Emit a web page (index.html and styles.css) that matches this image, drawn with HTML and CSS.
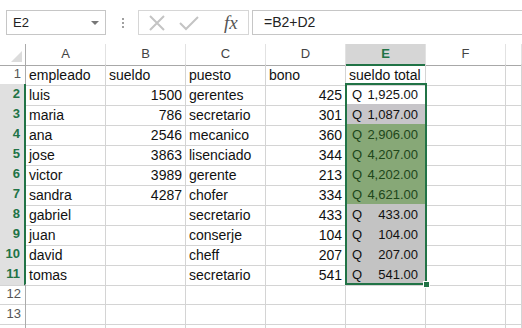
FILE: index.html
```html
<!DOCTYPE html>
<html lang="es">
<head>
<meta charset="UTF-8" />
<title>Hoja de cálculo</title>
<link rel="stylesheet" href="styles.css">
</head>
<body>

<div class="toolbar">
  <div class="namebox">
    <span>E2</span>
    <span class="arrow"></span>
  </div>
  <div class="grip"><i></i><i></i><i></i></div>
  <div class="btns">
    <svg class="ico" width="20" height="20" viewBox="0 0 20 20"><path d="M3 3 L17 17 M17 3 L3 17" stroke="#c4c4c4" stroke-width="2" fill="none"/></svg>
    <svg class="ico" width="22" height="20" viewBox="0 0 22 20"><path d="M2 10 L8 16 L20 4" stroke="#c4c4c4" stroke-width="2" fill="none"/></svg>
    <span class="fx">fx</span>
  </div>
  <div class="formula">=B2+D2</div>
</div>

<div class="sheet">
  <div class="row head">
    <div class="corner"><span class="tri"></span></div>
    <div>A</div><div>B</div><div>C</div><div>D</div><div class="sel">E</div><div>F</div><div></div>
  </div>

  <div class="row"><div class="rh">1</div><div>empleado</div><div>sueldo</div><div>puesto</div><div>bono</div><div>sueldo total</div><div></div><div></div></div>
  <div class="row"><div class="rh on">2</div><div>luis</div><div class="n">1500</div><div>gerentes</div><div class="n">425</div><div class="q"><span>Q</span><span>1,925.00</span></div><div></div><div></div></div>
  <div class="row"><div class="rh on">3</div><div>maria</div><div class="n">786</div><div>secretario</div><div class="n">301</div><div class="q g1"><span>Q</span><span>1,087.00</span></div><div></div><div></div></div>
  <div class="row"><div class="rh on">4</div><div>ana</div><div class="n">2546</div><div>mecanico</div><div class="n">360</div><div class="q gr"><span>Q</span><span>2,906.00</span></div><div></div><div></div></div>
  <div class="row"><div class="rh on">5</div><div>jose</div><div class="n">3863</div><div>lisenciado</div><div class="n">344</div><div class="q gr"><span>Q</span><span>4,207.00</span></div><div></div><div></div></div>
  <div class="row"><div class="rh on">6</div><div>victor</div><div class="n">3989</div><div>gerente</div><div class="n">213</div><div class="q gr"><span>Q</span><span>4,202.00</span></div><div></div><div></div></div>
  <div class="row"><div class="rh on">7</div><div>sandra</div><div class="n">4287</div><div>chofer</div><div class="n">334</div><div class="q gr"><span>Q</span><span>4,621.00</span></div><div></div><div></div></div>
  <div class="row"><div class="rh on">8</div><div>gabriel</div><div></div><div>secretario</div><div class="n">433</div><div class="q g2"><span>Q</span><span>433.00</span></div><div></div><div></div></div>
  <div class="row"><div class="rh on">9</div><div>juan</div><div></div><div>conserje</div><div class="n">104</div><div class="q g2"><span>Q</span><span>104.00</span></div><div></div><div></div></div>
  <div class="row"><div class="rh on">10</div><div>david</div><div></div><div>cheff</div><div class="n">207</div><div class="q g2"><span>Q</span><span>207.00</span></div><div></div><div></div></div>
  <div class="row"><div class="rh on">11</div><div>tomas</div><div></div><div>secretario</div><div class="n">541</div><div class="q g2"><span>Q</span><span>541.00</span></div><div></div><div></div></div>
  <div class="row"><div class="rh">12</div><div></div><div></div><div></div><div></div><div></div><div></div><div></div></div>
  <div class="row"><div class="rh">13</div><div></div><div></div><div></div><div></div><div></div><div></div><div></div></div>
  <div class="row"><div class="rh"></div><div></div><div></div><div></div><div></div><div></div><div></div><div></div></div>

  <!-- rango seleccionado E2:E11 -->
  <div class="selection"><span class="handle"></span></div>
</div>

</body>
</html>
```

FILE: styles.css
```css
body { margin: 0; background: #fff; font-family: "Liberation Sans", Arial, sans-serif; overflow: hidden; height: 328px; }

.toolbar { display: flex; align-items: center; height: 44px; padding-left: 6px; box-sizing: border-box; padding-bottom: 9px; padding-top: 10px; }
.namebox {
  width: 100px; height: 25px; box-sizing: border-box; border: 1px solid #c6c6c6;
  display: flex; align-items: center; justify-content: space-between; padding: 0 6px 0 6px;
  font-size: 13px; color: #222;
}
.namebox .arrow { width: 0; height: 0; border-left: 4px solid transparent; border-right: 4px solid transparent; border-top: 4px solid #777; }
.grip { display: flex; flex-direction: column; gap: 2px; margin: 0 14px 0 16px; }
.grip i { width: 2px; height: 2px; background: #a0a0a0; display: block; }
.btns {
  width: 111px; height: 25px; box-sizing: border-box; border: 1px solid #d6d6d6;
  display: flex; align-items: center; padding-left: 8px; gap: 11px;
}
.btns .ico { display: block; }
.btns .fx { font-family: "Liberation Serif", serif; font-style: italic; font-size: 19px; color: #555; margin-left: 13px; }
.formula {
  flex: 1; height: 25px; box-sizing: border-box; margin-left: 3px;
  border: 1px solid #c6c6c6; border-right: none;
  padding-left: 11px; font-size: 14px; line-height: 23px; color: #222;
}

.sheet { position: relative; }
.row { display: grid; grid-template-columns: 26px repeat(6, 80px) 16px; height: 20px; }
.row > div {
  box-sizing: border-box; border-right: 1px solid #d4d4d4; border-bottom: 1px solid #d4d4d4;
  font-size: 14px; line-height: 20px; padding: 1px 3px 0; white-space: nowrap; color: #111;
}
.row > .n { text-align: right; padding-right: 3px; }
.row > .q { display: flex; justify-content: space-between; padding: 1px 7px 0 6px; font-size: 13px; }
.row > .g1 { background: #c7c5c9; }
.row > .gr { background: #87a877; color: #20461a; }
.row > .g2 { background: #c3c3c3; }

.row.head > div {
  text-align: center; font-size: 13px; color: #444; border-right-color: #e2e2e2;
  border-bottom: 1px solid #a8a8a8; line-height: 20px; padding: 0;
}
.row.head > .sel { background: #d6d6d6; color: #217346; font-weight: bold; border-bottom: 2px solid #217346; }
.row.head > .corner { position: relative; border-right-color: #ababab; }
.tri { position: absolute; right: 3px; bottom: 3px; width: 0; height: 0; border-left: 11px solid transparent; border-bottom: 11px solid #dcdcdc; }

.row > .rh { text-align: right; padding: 0 4px 0 0; font-size: 13px; color: #555; border-right-color: #ababab; }
.row > .rh.on { background: #e0e0e0; color: #217346; font-weight: bold; border-right: 2px solid #217346; }

.selection { position: absolute; left: 345px; top: 39px; width: 82px; height: 202px; box-sizing: border-box; border: 2px solid #217346; }
.handle { position: absolute; right: -5px; bottom: -5px; width: 5px; height: 5px; background: #217346; border: 1px solid #fff; }
```
